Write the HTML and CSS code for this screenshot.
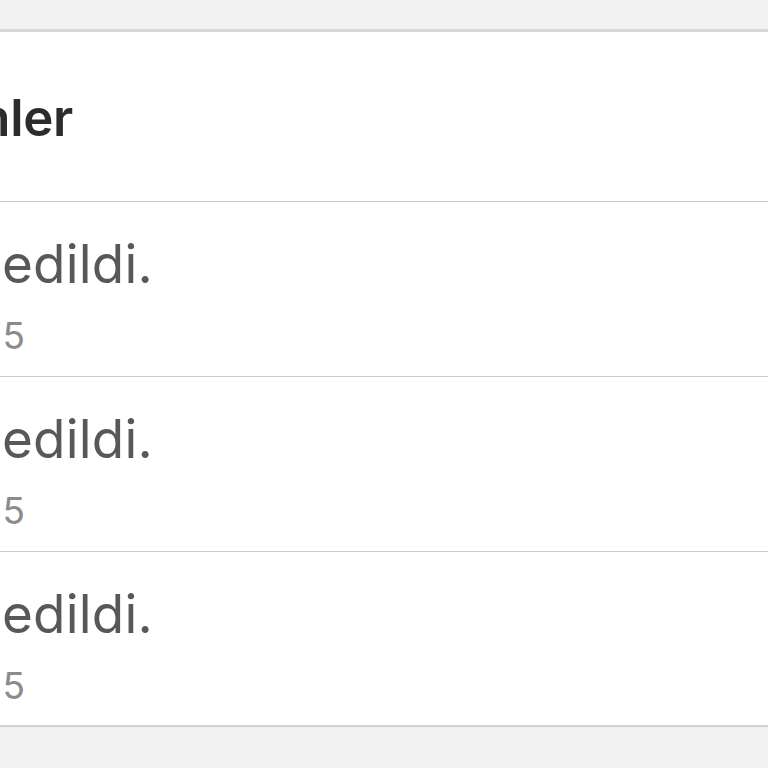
FILE: index.html
```html
<!DOCTYPE html>
<html lang="tr">
<head>
<meta charset="utf-8">
<link rel="stylesheet" href="styles.css">
</head>
<body>
<div class="page">
  <section class="card">
    <header class="card-header">
      <div class="clip clip-title"><h2 class="title">Son Bildirimler</h2></div>
    </header>
    <ul class="list">
      <li class="row">
        <div class="clip clip-msg"><span class="msg">Siparişiniz teslim edildi.</span></div>
        <div class="clip clip-date"><span class="date">12.03.2025</span></div>
      </li>
      <li class="row">
        <div class="clip clip-msg"><span class="msg">Siparişiniz teslim edildi.</span></div>
        <div class="clip clip-date"><span class="date">11.03.2025</span></div>
      </li>
      <li class="row">
        <div class="clip clip-msg"><span class="msg">Siparişiniz teslim edildi.</span></div>
        <div class="clip clip-date"><span class="date">10.03.2025</span></div>
      </li>
    </ul>
  </section>
</div>
</body>
</html>
```
FILE: styles.css
```css
html, body {
  margin: 0;
  padding: 0;
  background: #f2f2f2;
  font-family: Inter, "Noto Sans", sans-serif;
}
.page {
  padding-top: 29px;
  height: 768px;
  box-sizing: border-box;
  overflow: hidden;
}
.card {
  background: #ffffff;
  border-top: 3px solid #d6d6d6;
  border-bottom: 2px solid #d2d2d2;
}
.card-header {
  height: 170px;
  border-bottom: 1px solid #cbcbcb;
  display: flex;
  align-items: center;
  box-sizing: border-box;
  padding-top: 2px;
}
.clip {
  display: flex;
  justify-content: flex-end;
  white-space: nowrap;
}
.clip-title { width: 73px; }
.clip-msg { width: 153px; }
.clip-date { width: 30px; }
.title {
  margin: 0;
  font-size: 51px;
  font-weight: 600;
  color: #2c2c2c;
  line-height: 1;
  letter-spacing: -0.3px;
}
.list {
  list-style: none;
  margin: 0;
  padding: 0;
}
.row {
  height: 139px;
  border-bottom: 1px solid #cbcbcb;
  display: flex;
  flex-direction: column;
  padding-top: 35px;
}
.row:last-child { border-bottom: none; height: 138px; }
.msg {
  font-size: 53px;
  line-height: 54px;
  color: #585858;
  letter-spacing: 0.2px;
}
.date {
  margin-top: 27px;
  font-size: 37px;
  line-height: 36px;
  color: #8c8c8c;
  letter-spacing: 5px;
  display: block;
}
```
